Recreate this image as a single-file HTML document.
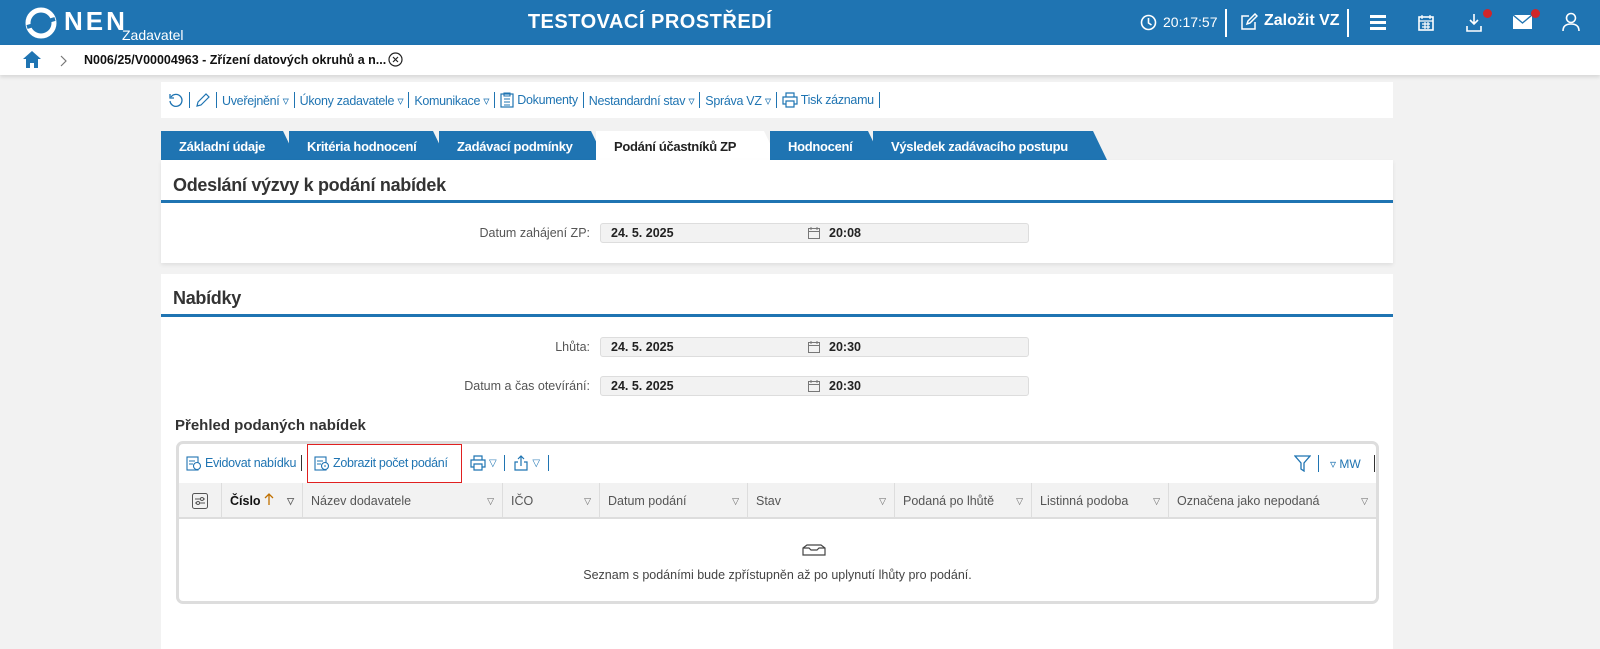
<!DOCTYPE html>
<html><head><meta charset="utf-8"><style>
*{box-sizing:border-box;margin:0;padding:0}
body{width:1600px;height:649px;overflow:hidden;background:#f2f2f2;font-family:"Liberation Sans",Arial,sans-serif;color:#333;position:relative}
.abs{position:absolute}
#hdr{left:0;top:0;width:1600px;height:45px;background:#1f74b2;color:#fff}
#bc{left:0;top:45px;width:1600px;height:30px;background:#fff;box-shadow:0 2px 4px rgba(0,0,0,.12)}
.panel{background:#fff;position:absolute;left:161px;width:1232px}
.row{display:flex;align-items:center;white-space:nowrap}
.row a{color:#1f74b2;font-size:12.5px;letter-spacing:-.3px;display:flex;align-items:center;gap:3px}
.sep{display:inline-block;width:1px;height:16px;background:#1f74b2;margin:0 5px}
.tab{position:absolute;top:131px;height:29px;background:#1f74b2;color:#fff;font-weight:bold;font-size:13px;letter-spacing:-.3px;line-height:31px;padding-left:18px;clip-path:polygon(0 0,calc(100% - 14px) 0,100% 100%,0 100%)}
.tab.act{background:#fff;color:#222}
h2{position:absolute;font-size:18px;font-weight:bold;color:#333;letter-spacing:-.3px}
.bl{position:absolute;left:0;width:1232px;height:3px;background:#1f74b2}
.lbl{position:absolute;font-size:12.5px;color:#555;text-align:right;width:300px}
.inp{position:absolute;left:600px;width:429px;height:20px;background:#f2f2f2;border:1px solid #ddd;border-radius:3px;font-size:12.5px;font-weight:bold;color:#222;line-height:18px;padding-left:10px}
.inp .t{position:absolute;left:228px}
.inp svg{position:absolute;left:207px;top:3px}
.th{position:absolute;top:483px;height:36px;border-right:1px solid #ddd;font-size:12.5px;color:#555;line-height:36px;padding-left:8px;background:#f2f2f2;border-bottom:2px solid #ddd}
.th .f{position:absolute;right:8px;font-size:9px;color:#666}
</style></head><body>
<div id="hdr" class="abs">
 <svg class="abs" style="left:25px;top:7px" width="32" height="32" viewBox="0 0 32 32"><circle cx="16" cy="16" r="13" fill="none" stroke="#fff" stroke-width="5"/><path d="M2 20 L30 12" stroke="#1f74b2" stroke-width="4"/></svg>
 <div class="abs" style="left:64px;top:6px;font-size:26px;font-weight:bold;letter-spacing:3px">NEN</div>
 <div class="abs" style="left:122px;top:27px;font-size:14px">Zadavatel</div>
 <div class="abs" style="left:0;width:1300px;text-align:center;top:11px;font-size:20px;font-weight:bold;letter-spacing:.5px">TESTOVACÍ PROSTŘEDÍ</div>
 <svg class="abs" style="left:1140px;top:14px" width="17" height="17" viewBox="0 0 17 17"><circle cx="8.5" cy="8.5" r="7" fill="none" stroke="#fff" stroke-width="1.6"/><path d="M8.5 4v5l3 2" fill="none" stroke="#fff" stroke-width="1.6"/></svg>
 <div class="abs" style="left:1163px;top:14px;font-size:14px">20:17:57</div>
 <div class="abs" style="left:1225px;top:9px;width:2px;height:28px;background:#fff"></div>
 <svg class="abs" style="left:1240px;top:13px" width="18" height="18" viewBox="0 0 18 18"><path d="M9 3H2v13h13V9" fill="none" stroke="#fff" stroke-width="1.5"/><path d="M7 11l1-3 7-7 2 2-7 7z" fill="none" stroke="#fff" stroke-width="1.5"/></svg>
 <div class="abs" style="left:1264px;top:12px;font-size:16px;font-weight:bold">Založit VZ</div>
 <div class="abs" style="left:1347px;top:9px;width:2px;height:28px;background:#fff"></div>
 <div class="abs" style="left:1370px;top:15px;width:16px;height:3px;background:#fff;box-shadow:0 6px 0 #fff,0 12px 0 #fff"></div>
 <svg class="abs" style="left:1417px;top:14px" width="18" height="18" viewBox="0 0 18 18"><rect x="2" y="3" width="14" height="13" fill="none" stroke="#fff" stroke-width="1.6"/><path d="M2 7h14M5 1v4M13 1v4M5 10h8M5 13h8M8 8v7M11 8v7" stroke="#fff" stroke-width="1.2"/></svg>
 <svg class="abs" style="left:1465px;top:13px" width="20" height="20" viewBox="0 0 20 20"><path d="M9 1v10M5 7l4 4 4-4M2 13v5h14v-5" fill="none" stroke="#fff" stroke-width="1.6"/></svg>
 <div class="abs" style="left:1483px;top:9px;width:9px;height:9px;border-radius:50%;background:#d0262a"></div>
 <svg class="abs" style="left:1513px;top:15px" width="19" height="14" viewBox="0 0 19 14"><rect x="0" y="0" width="19" height="14" fill="#fff"/><path d="M0 0l9.5 8L19 0" fill="none" stroke="#1f74b2" stroke-width="1.4"/></svg>
 <div class="abs" style="left:1531px;top:9px;width:9px;height:9px;border-radius:50%;background:#d0262a"></div>
 <svg class="abs" style="left:1562px;top:12px" width="18" height="20" viewBox="0 0 18 20"><circle cx="9" cy="6" r="4.5" fill="none" stroke="#fff" stroke-width="1.6"/><path d="M1 19c0-5 3-7 8-7s8 2 8 7" fill="none" stroke="#fff" stroke-width="1.6"/></svg>
</div>
<div id="bc" class="abs">
 <svg class="abs" style="left:23px;top:6px" width="18" height="17" viewBox="0 0 18 17"><path d="M9 0L0 8h3v9h4v-5h4v5h4V8h3z" fill="#1f74b2"/></svg>
 <svg class="abs" style="left:60px;top:10px" width="8" height="12" viewBox="0 0 8 12"><path d="M1 1l5 5-5 5" fill="none" stroke="#777" stroke-width="1.2"/></svg>
 <div class="abs" style="left:84px;top:8px;font-size:12.5px;font-weight:bold;color:#111">N006/25/V00004963 - Zřízení datových okruhů a n...</div>
 <svg class="abs" style="left:388px;top:7px" width="15" height="15" viewBox="0 0 15 15"><circle cx="7.5" cy="7.5" r="6.5" fill="none" stroke="#222" stroke-width="1.2"/><path d="M5 5l5 5M10 5l-5 5" stroke="#222" stroke-width="1.2"/></svg>
</div>
<div class="panel" style="top:82px;height:36px"></div>
<div class="abs row" style="left:168px;top:91px;height:18px">
 <a><svg width="16" height="16" viewBox="0 0 16 16"><path d="M3 5a6 6 0 1 1-1 4" fill="none" stroke="#1f74b2" stroke-width="1.3"/><path d="M2 2v4h4" fill="none" stroke="#1f74b2" stroke-width="1.3"/></svg></a><span class="sep"></span>
 <a><svg width="16" height="16" viewBox="0 0 16 16"><path d="M2 14l1-4 8-8 3 3-8 8z" fill="none" stroke="#1f74b2" stroke-width="1.2"/></svg></a><span class="sep"></span>
 <a>Uveřejnění ▿</a><span class="sep"></span><a>Úkony zadavatele ▿</a><span class="sep"></span><a>Komunikace ▿</a><span class="sep"></span>
 <a><svg width="14" height="16" viewBox="0 0 14 16"><rect x="1" y="2" width="12" height="13" fill="none" stroke="#1f74b2" stroke-width="1.2"/><path d="M4 1h6v3H4zM4 7h6M4 10h6M4 13h6" fill="none" stroke="#1f74b2" stroke-width="1.1"/></svg>Dokumenty</a><span class="sep"></span>
 <a>Nestandardní stav ▿</a><span class="sep"></span><a>Správa VZ ▿</a><span class="sep"></span>
 <a><svg width="16" height="16" viewBox="0 0 16 16"><path d="M4 5V1h8v4M4 12H1V5h14v7h-3M4 9h8v6H4z" fill="none" stroke="#1f74b2" stroke-width="1.2"/></svg>Tisk záznamu</a><span class="sep"></span>
</div>
<div class="tab" style="left:161px;width:136px">Základní údaje</div>
<div class="tab" style="left:289px;width:158px">Kritéria hodnocení</div>
<div class="tab" style="left:439px;width:166px">Zadávací podmínky</div>
<div class="tab act" style="left:596px;width:182px">Podání účastníků ZP</div>
<div class="tab" style="left:770px;width:112px">Hodnocení</div>
<div class="tab" style="left:873px;width:234px">Výsledek zadávacího postupu</div>
<div class="panel" style="top:160px;height:103px;box-shadow:0 2px 4px rgba(0,0,0,.08)">
 <h2 style="left:12px;top:15px">Odeslání výzvy k podání nabídek</h2>
 <div class="bl" style="top:40px"></div>
</div>
<div class="lbl" style="left:290px;top:226px">Datum zahájení ZP:</div>
<div class="inp" style="top:223px">24. 5. 2025<svg width="12" height="12" viewBox="0 0 12 12"><rect x="0.5" y="1.5" width="11" height="10" fill="none" stroke="#777"/><path d="M0.5 4.5h11M3 0v3M9 0v3" stroke="#777"/></svg><span class="t">20:08</span></div>
<div class="panel" style="top:274px;height:375px">
 <h2 style="left:12px;top:14px">Nabídky</h2>
 <div class="bl" style="top:40px"></div>
</div>
<div class="lbl" style="left:290px;top:340px">Lhůta:</div>
<div class="inp" style="top:337px">24. 5. 2025<svg width="12" height="12" viewBox="0 0 12 12"><rect x="0.5" y="1.5" width="11" height="10" fill="none" stroke="#777"/><path d="M0.5 4.5h11M3 0v3M9 0v3" stroke="#777"/></svg><span class="t">20:30</span></div>
<div class="lbl" style="left:290px;top:379px">Datum a čas otevírání:</div>
<div class="inp" style="top:376px">24. 5. 2025<svg width="12" height="12" viewBox="0 0 12 12"><rect x="0.5" y="1.5" width="11" height="10" fill="none" stroke="#777"/><path d="M0.5 4.5h11M3 0v3M9 0v3" stroke="#777"/></svg><span class="t">20:30</span></div>
<div class="abs" style="left:175px;top:417px;font-size:15px;font-weight:bold;color:#333">Přehled podaných nabídek</div>
<div class="abs" style="left:176px;top:441px;width:1203px;height:163px;border:3px solid #ddd;border-radius:7px;background:#fff"></div>
<div class="abs row" style="left:186px;top:454px;height:18px">
 <a><svg width="16" height="16" viewBox="0 0 16 16"><rect x="1" y="2" width="11" height="13" fill="none" stroke="#1f74b2" stroke-width="1.1"/><circle cx="11" cy="11" r="3.5" fill="#fff" stroke="#1f74b2" stroke-width="1.1"/><path d="M3 6h6M3 9h4" stroke="#1f74b2"/></svg>Evidovat nabídku</a><span class="sep" style="background:#333"></span>
</div>
<div class="abs" style="left:307px;top:444px;width:155px;height:39px;border:1px solid #e02020"></div>
<div class="abs row" style="left:314px;top:454px;height:18px"><a><svg width="16" height="16" viewBox="0 0 16 16"><rect x="1" y="2" width="11" height="13" fill="none" stroke="#1f74b2" stroke-width="1.1"/><circle cx="11" cy="11" r="3.5" fill="#fff" stroke="#1f74b2" stroke-width="1.1"/><path d="M3 6h6M3 9h4M10 11h2" stroke="#1f74b2"/></svg>Zobrazit počet podání</a></div>
<div class="abs row" style="left:470px;top:454px;height:18px">
 <a><svg width="16" height="16" viewBox="0 0 16 16"><path d="M4 5V1h8v4M4 12H1V5h14v7h-3M4 9h8v6H4z" fill="none" stroke="#1f74b2" stroke-width="1.2"/></svg><span style="font-size:10px">▽</span></a><span class="sep" style="margin:0 8px"></span>
 <a><svg width="16" height="16" viewBox="0 0 16 16"><path d="M8 11V1M5 4l3-3 3 3M5 7H2v8h12V7h-3" fill="none" stroke="#1f74b2" stroke-width="1.2"/></svg><span style="font-size:10px">▽</span></a><span class="sep" style="margin:0 8px"></span>
</div>
<svg class="abs" style="left:1294px;top:455px" width="17" height="17" viewBox="0 0 17 17"><path d="M1 1h15l-6 7v8l-3-2V8z" fill="none" stroke="#1f74b2" stroke-width="1.3"/></svg>
<div class="abs" style="left:1318px;top:455px;width:1px;height:17px;background:#1f74b2"></div>
<div class="abs" style="left:1330px;top:457px;font-size:12px;color:#1f74b2">▿ MW</div>
<div class="abs" style="left:1374px;top:455px;width:1px;height:17px;background:#333"></div>
<div class="th" style="left:179px;width:43px"><svg style="margin:10px 0 0 5px" width="16" height="16" viewBox="0 0 16 16"><rect x="0.5" y="0.5" width="15" height="15" rx="2" fill="none" stroke="#555"/><path d="M3 6h10M3 10h10" stroke="#555"/><circle cx="10" cy="6" r="1.5" fill="#fff" stroke="#555"/><circle cx="6" cy="10" r="1.5" fill="#fff" stroke="#555"/></svg></div>
<div class="th" style="left:222px;width:81px;color:#111;font-weight:bold">Číslo <svg width="10" height="12" viewBox="0 0 10 12"><path d="M5 12V1M1 5l4-4 4 4" fill="none" stroke="#c07000" stroke-width="1.3"/></svg><span class="f">▽</span></div>
<div class="th" style="left:303px;width:200px">Název dodavatele<span class="f">▽</span></div>
<div class="th" style="left:503px;width:97px">IČO<span class="f">▽</span></div>
<div class="th" style="left:600px;width:148px">Datum podání<span class="f">▽</span></div>
<div class="th" style="left:748px;width:147px">Stav<span class="f">▽</span></div>
<div class="th" style="left:895px;width:137px">Podaná po lhůtě<span class="f">▽</span></div>
<div class="th" style="left:1032px;width:137px">Listinná podoba<span class="f">▽</span></div>
<div class="th" style="left:1169px;width:207px;border-right:none">Označena jako nepodaná<span class="f">▽</span></div>
<svg class="abs" style="left:802px;top:544px" width="24" height="12" viewBox="0 0 24 12"><path d="M1 4l4-3h14l4 3v7H1zM1 4h6l2 2h6l2-2h6" fill="none" stroke="#444" stroke-width="1.2"/></svg>
<div class="abs" style="left:179px;width:1197px;text-align:center;top:568px;font-size:12.5px;color:#444">Seznam s podáními bude zpřístupněn až po uplynutí lhůty pro podání.</div>
</body></html>
